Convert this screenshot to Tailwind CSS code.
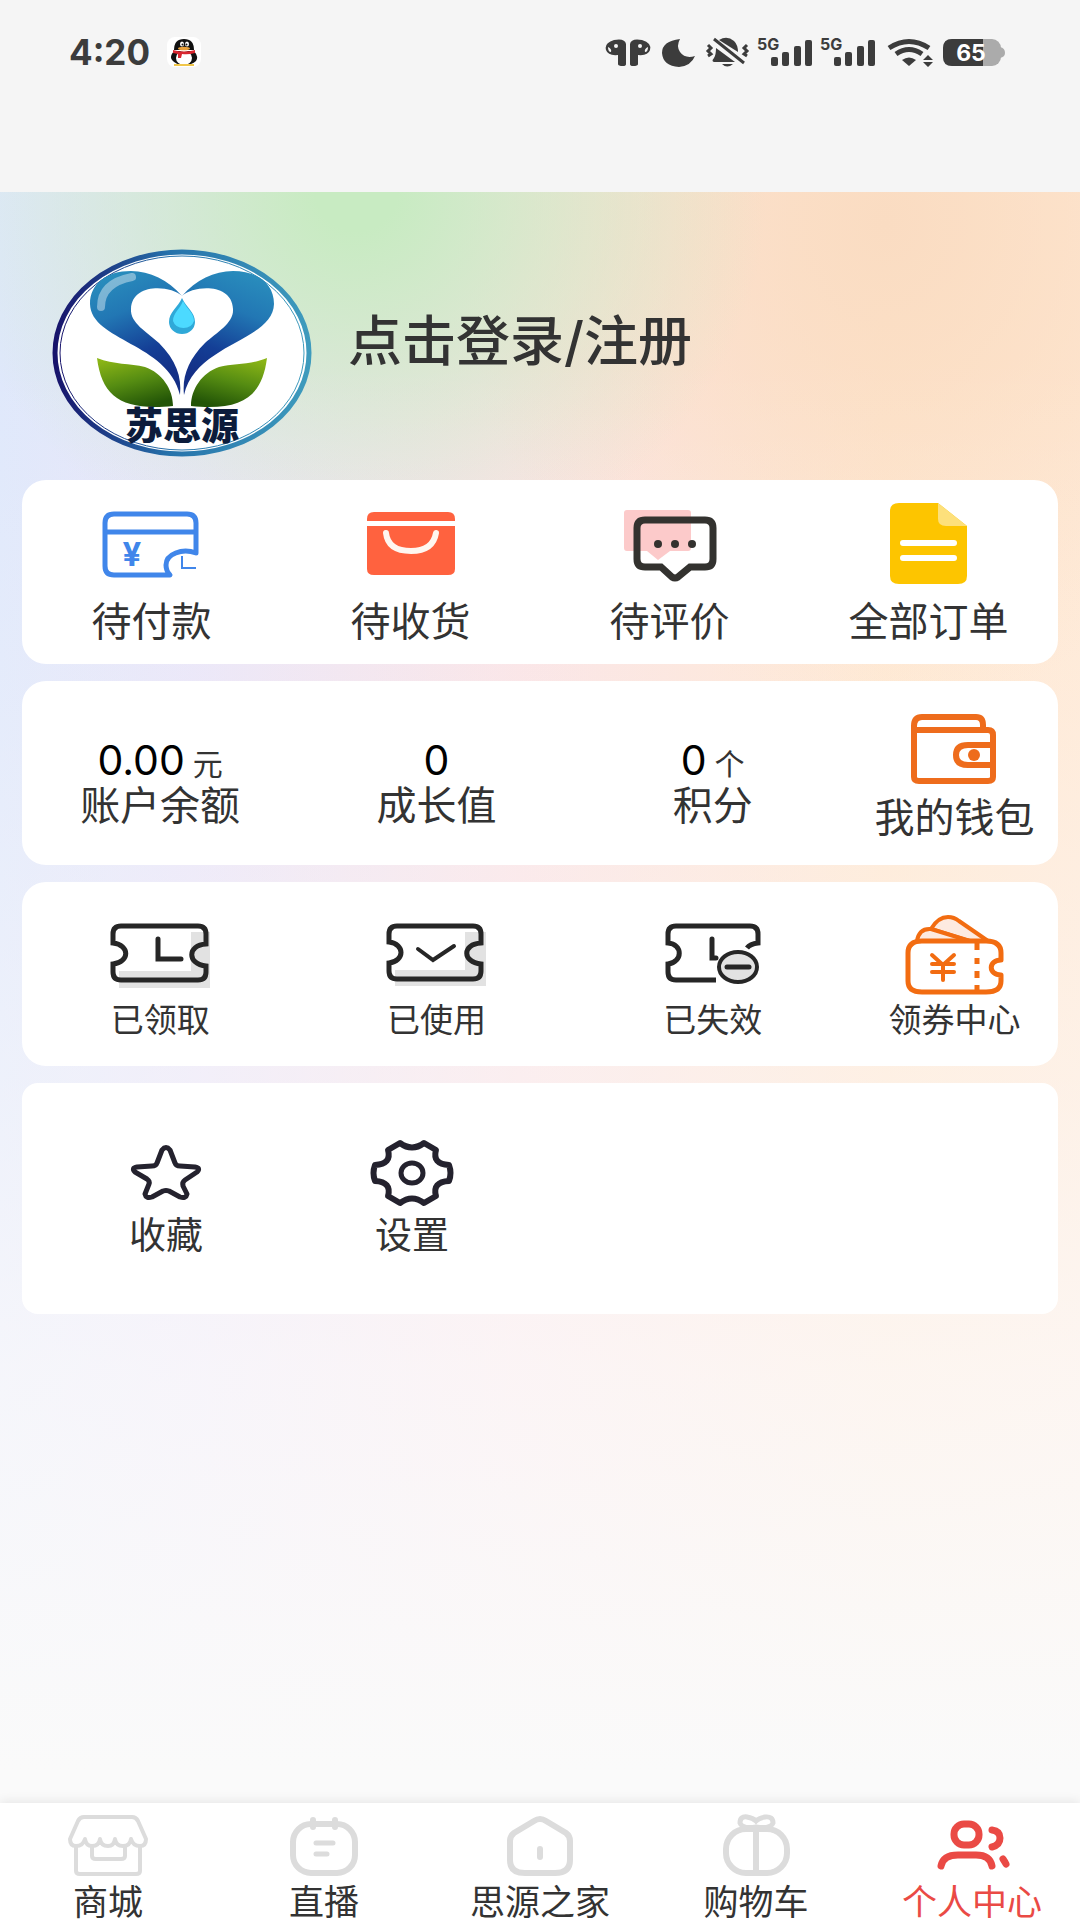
<!DOCTYPE html>
<html lang="zh-CN">
<head>
    <meta charset="UTF-8">
    <meta name="viewport" content="width=device-width, initial-scale=1.0">
    <script src="https://cdn.jsdelivr.net/npm/@tailwindcss/browser@4"></script>
    <title>个人中心</title>
</head>
<body class="min-h-screen flex flex-col bg-[#f5f5f5] text-[#333] font-['Inter','Noto_Sans_CJK_SC',sans-serif]">

    <!-- status bar -->
    <div class="h-48 shrink-0 pt-7 pl-[69px] pr-[75px]">
        <div class="flex items-center justify-between h-12">
            <div class="flex items-center gap-4">
                <span class="text-[35px] leading-12 font-bold text-[#3c3c3c]">4:20</span>
                <svg class="w-9 h-8" viewBox="0 0 36 32">
                    <rect x="1" y="1" width="34" height="30" rx="8" fill="#fff"/>
                    <path d="M6 24Q3 21 8 15L28 15Q33 21 30 25Q26 29 18 29Q10 29 6 24Z" fill="#111"/>
                    <ellipse cx="18" cy="22" rx="8" ry="7" fill="#fff"/>
                    <path d="M8 14Q8 3 18 3Q28 3 28 14Z" fill="#111"/>
                    <ellipse cx="16" cy="8" rx="2" ry="2.5" fill="#fff"/>
                    <ellipse cx="21" cy="8" rx="2" ry="2.5" fill="#fff"/>
                    <circle cx="16.500" cy="8.500" r="1" fill="#111"/>
                    <circle cx="20.500" cy="8.500" r="1" fill="#111"/>
                    <ellipse cx="18" cy="12.500" rx="6" ry="1.800" fill="#e9a13b"/>
                    <path d="M7 14Q18 17 29 14L29 17Q22 19 16 18L15 22L12 22V18L7 17Z" fill="#d8262f"/>
                    <path d="M8 29H28" stroke="#f0c64a" stroke-width="2"/>
                </svg>
            </div>
            <div class="flex items-center gap-1.5 text-[#3c3c3c]">
                <svg class="w-[50px] h-8" viewBox="0 0 50 32" fill="currentColor">
                    <path d="M21 8V28Q21 30 18 30Q13 30 13 28V19Q3 20 1 14Q-1 7 9 4Q20 2 21 8Z"/>
                    <path d="M25 8V28Q25 30 28 30Q33 30 33 28V19Q43 20 45 14Q47 7 37 4Q26 2 25 8Z"/>
                    <path d="M3 11Q3 16 6 16Q7 13 3 11ZM43 11Q43 16 40 16Q39 13 43 11Z" fill="#f5f5f5"/>
                    <circle cx="11" cy="10" r="2" fill="#f5f5f5"/>
                    <circle cx="35" cy="10" r="2" fill="#f5f5f5"/>
                </svg>
                <svg class="w-[38px] h-8" viewBox="0 0 38 32" fill="currentColor">
                    <path d="M19 3Q15 10 19 16Q24 23 34 20Q30 30 18 31Q2 30 1 17Q1 5 19 3Z"/>
                </svg>
                <svg class="w-[45px] h-8" viewBox="0 0 45 32" fill="currentColor">
                    <path d="M14 4Q22 -1 29 5Q33 9 33 16Z"/>
                    <path d="M11 12L30 26H9Q6 25 9 22Q11 19 11 12Z"/>
                    <path d="M17 28H28Q22 33 17 28Z"/>
                    <path d="M9 3L39 27M3 9L6 12L3 15L6 18L3 20M42 9L39 12L42 15L39 18L42 20" fill="none" stroke="currentColor" stroke-width="3"/>
                </svg>
                <svg class="w-[57px] h-8 overflow-visible" viewBox="0 0 57 32" fill="currentColor">
                    <text x="1" y="14" font-size="16" font-weight="700">5G</text>
                    <rect x="15" y="21" width="7" height="9" rx="2"/>
                    <rect x="26" y="16" width="7" height="14" rx="2"/>
                    <rect x="38" y="10" width="7" height="20" rx="2"/>
                    <rect x="49" y="4" width="7" height="26" rx="2"/>
                </svg>
                <svg class="w-[57px] h-8 overflow-visible" viewBox="0 0 57 32" fill="currentColor">
                    <text x="1" y="14" font-size="16" font-weight="700">5G</text>
                    <rect x="15" y="21" width="7" height="9" rx="2"/>
                    <rect x="26" y="16" width="7" height="14" rx="2"/>
                    <rect x="38" y="10" width="7" height="20" rx="2"/>
                    <rect x="49" y="4" width="7" height="26" rx="2"/>
                </svg>
                <svg class="w-[53px] h-8" viewBox="0 0 53 32">
                    <path d="M7 12Q27 -1 47 12M14 18Q27 9 40 18" fill="none" stroke="currentColor" stroke-width="5"/>
                    <path d="M20 24Q27 19 34 24L27 30Z" fill="currentColor"/>
                    <path d="M46 19L51 24H41ZM41 26H51L46 31Z" fill="currentColor"/>
                </svg>
                <svg class="w-16 h-8" viewBox="0 0 64 32">
                    <rect x="2" y="3" width="58" height="27" rx="9" fill="#ababab"/>
                    <path d="M59 11Q64 12 64 17Q64 21 59 22Z" fill="#ababab"/>
                    <path d="M11 3H42V30H11Q2 30 2 21V12Q2 3 11 3Z" fill="currentColor"/>
                    <text x="30" y="25" text-anchor="middle" font-size="23" font-weight="700" fill="#fff">65</text>
                </svg>
            </div>
        </div>
    </div>

    <main class="flex-1 pb-8 bg-[linear-gradient(to_bottom,rgba(251,250,251,0)_10%,rgba(252,250,251,0.2)_32%,rgba(252,250,251,0.5)_55%,rgba(252,250,251,0.76)_73%,#fafafa_98%),radial-gradient(ellipse_38%_24%_at_33%_0%,#c8ebc2_10%,transparent),radial-gradient(ellipse_40%_30%_at_82%_2%,#fadcc2,transparent),linear-gradient(to_right,#dfe8fb,#e8e4f8_18%,#fae2e4_48%,#ffe6cd_82%,#ffe8d3)]">

        <header class="flex items-start gap-9 pt-[57px] pl-[52px] pr-6 pb-[23px]">
            <svg class="w-[260px] h-[208px] shrink-0" viewBox="0 0 260 208">
                <defs>
                    <linearGradient id="ring">
                        <stop offset="0" stop-color="#17136b"/>
                        <stop offset="0.45" stop-color="#2672ab"/>
                        <stop offset="1" stop-color="#3e9bbd"/>
                    </linearGradient>
                    <linearGradient id="heart" x1="0" y1="0" x2="0.3" y2="1">
                        <stop offset="0" stop-color="#2b93bf"/>
                        <stop offset="0.4" stop-color="#2277b4"/>
                        <stop offset="0.75" stop-color="#143f96"/>
                        <stop offset="1" stop-color="#142f86"/>
                    </linearGradient>
                    <linearGradient id="leaf" x1="0.2" y1="0" x2="0.6" y2="1">
                        <stop offset="0" stop-color="#8bb516"/>
                        <stop offset="0.5" stop-color="#558c12"/>
                        <stop offset="1" stop-color="#235507"/>
                    </linearGradient>
                    <g id="half">
                        <path d="M130 47C116 31 98 22 79 22C54 22 38 35 38 55C39 92 116 94 128 146C130 128 124 111 107 94C95 83 78 74 79 60C80 34 118 36 130 47Z" fill="url(#heart)"/>
                        <path d="M45 109C62 116 78 114 93 118C110 124 121 140 121 157C70 162 50 148 45 109Z" fill="url(#leaf)"/>
                    </g>
                </defs>
                <ellipse cx="130" cy="104" rx="127" ry="101" fill="#fff" stroke="url(#ring)" stroke-width="5"/>
                <ellipse cx="130" cy="104" rx="122" ry="97" fill="none" stroke="url(#ring)" stroke-width="1"/>
                <use href="#half"/>
                <use href="#half" transform="translate(260 0) scale(-1 1)"/>
                <path d="M49 58Q49 34 80 28" fill="none" stroke="#fff" stroke-opacity="0.4" stroke-width="8" stroke-linecap="round"/>
                <path d="M130 49C134 58 143 63 143 73A13 12 0 0 1 117 73C117 63 126 58 130 49Z" fill="#2fa9d8"/>
                <path d="M131 52C135 60 142 64 142 72A11 10 0 0 1 121 72C121 64 128 60 131 52Z" fill="#4cdaff"/>
                <text x="130" y="190" text-anchor="middle" font-size="38" font-weight="900" fill="#0c1c3c">苏思源</text>
            </svg>
            <a href="#login" class="mt-[61px] text-[54px] leading-16 font-medium">点击登录/注册</a>
        </header>

        <div class="flex flex-col gap-[17px] px-[22px]">
            <!-- orders -->
            <section class="grid grid-cols-4 bg-white rounded-3xl pt-[22px] pb-[18px] text-[40px] leading-12">
                <a href="#unpaid" class="flex flex-col items-center gap-3">
                    <svg class="w-[100px] h-[84px]" viewBox="0 0 100 84">
                        <path d="M68 73H12Q3 73 3 64V21Q3 12 12 12H85Q94 12 94 21V51C80 46 64 52 64 63Q64 69 68 73ZM3 30H94" fill="none" stroke="#4086ea" stroke-width="5" stroke-linejoin="round"/>
                        <text x="30" y="64" text-anchor="middle" font-size="33" font-weight="700" fill="#4086ea">¥</text>
                        <path d="M80 54V66H94" fill="none" stroke="#4086ea" stroke-width="2"/>
                    </svg>
                    待付款
                </a>
                <a href="#shipping" class="flex flex-col items-center gap-3">
                    <svg class="w-[100px] h-[84px]" viewBox="0 0 100 84">
                        <path d="M6 19V17Q6 10 13 10H87Q94 10 94 17V19ZM6 24H94V67Q94 73 87 73H13Q6 73 6 67Z" fill="#ff623f"/>
                        <path d="M25 31Q27 49 50 49Q72 49 75 31" fill="none" stroke="#fff6f0" stroke-width="6" stroke-linecap="round"/>
                    </svg>
                    待收货
                </a>
                <a href="#review" class="flex flex-col items-center gap-3">
                    <svg class="w-[100px] h-[84px]" viewBox="0 0 100 84">
                        <path d="M7 8H68Q71 8 71 11V46Q71 49 68 49H50L38 58L27 49H7Q4 49 4 46V11Q4 8 7 8Z" fill="#fccaca"/>
                        <path d="M25 18H85Q93 18 93 26V57Q93 65 85 65H70L58 75Q55 77 52 75L41 65H25Q17 65 17 57V26Q17 18 25 18Z" fill="none" stroke="#33322f" stroke-width="7"/>
                        <g fill="#33322f">
                            <circle cx="38" cy="42" r="4"/>
                            <circle cx="55" cy="42" r="4"/>
                            <circle cx="72" cy="42" r="4"/>
                        </g>
                    </svg>
                    待评价
                </a>
                <a href="#orders" class="flex flex-col items-center gap-3">
                    <svg class="w-[100px] h-[84px]" viewBox="0 0 100 84">
                        <path d="M20 1H59L88 24V74Q88 82 79 82H20Q11 82 11 74V9Q11 1 20 1Z" fill="#fdc500"/>
                        <path d="M59 1L88 24H67Q59 24 59 17Z" fill="#fde07b"/>
                        <path d="M24 41H75M24 56H75" stroke="#fff" stroke-width="6" stroke-linecap="round"/>
                    </svg>
                    全部订单
                </a>
            </section>

            <!-- wallet -->
            <section class="grid grid-cols-[4fr_4fr_4fr_3fr] bg-white rounded-3xl pt-[25px] pb-[23px] text-[40px] leading-12">
                <a href="#balance" class="flex flex-col items-center pt-8">
                    <span class="flex items-baseline gap-2 h-11 leading-11"><span class="text-[41px] text-black">0.00</span><span class="text-[30px]">元</span></span>
                    账户余额
                </a>
                <a href="#growth" class="flex flex-col items-center pt-8">
                    <span class="flex items-baseline h-11 leading-11"><span class="text-[41px] text-black">0</span></span>
                    成长值
                </a>
                <a href="#points" class="flex flex-col items-center pt-8">
                    <span class="flex items-baseline gap-2 h-11 leading-11"><span class="text-[41px] text-black">0</span><span class="text-[30px]">个</span></span>
                    积分
                </a>
                <a href="#wallet" class="flex flex-col items-center gap-1">
                    <svg class="w-[100px] h-[84px]" viewBox="0 0 100 84" fill="none" stroke="#ee6c1c" stroke-width="6">
                        <path d="M10 23V71Q10 75 15 75H84Q89 75 89 71V29Q89 24 84 24H10V20Q10 11 18 11H72Q79 11 79 19V24"/>
                        <path d="M89 39H64Q52 39 52 49Q52 59 64 59H89"/>
                        <circle cx="70" cy="49" r="6" fill="#ee6c1c" stroke="none"/>
                    </svg>
                    我的钱包
                </a>
            </section>

            <!-- coupons -->
            <section class="grid grid-cols-[4fr_4fr_4fr_3fr] bg-white rounded-3xl pt-[30px] pb-[26px] text-[33px] leading-10">
                <a href="#received" class="flex flex-col items-center gap-1">
                    <svg class="w-[100px] h-[84px]" viewBox="0 0 100 84">
                        <path d="M9 20H100V76H9Z" fill="#e2e2e2"/>
                        <path d="M4 16H81V59H4Z" fill="#fff"/>
                        <path d="M3 31V22Q3 14 11 14H88Q96 14 96 22V32C77 33 77 52 96 54V60Q96 68 88 68H11Q3 68 3 60V52C20 50 20 33 3 31Z" fill="none" stroke="#262626" stroke-width="5"/>
                        <path d="M48 27V47H71" fill="none" stroke="#262626" stroke-width="5" stroke-linecap="round"/>
                    </svg>
                    已领取
                </a>
                <a href="#used" class="flex flex-col items-center gap-1">
                    <svg class="w-[100px] h-[84px]" viewBox="0 0 100 84">
                        <path d="M9 20H100V74H9Z" fill="#e2e2e2"/>
                        <path d="M4 16H79V58H4Z" fill="#fff"/>
                        <path d="M3 30V22Q3 14 11 14H87Q95 14 95 22V31C76 32 76 50 95 52V59Q95 67 87 67H11Q3 67 3 59V51C19 49 19 32 3 30Z" fill="none" stroke="#262626" stroke-width="5"/>
                        <path d="M32 37L47 48L68 34" fill="none" stroke="#262626" stroke-width="4" stroke-linecap="round"/>
                    </svg>
                    已使用
                </a>
                <a href="#expired" class="flex flex-col items-center gap-1">
                    <svg class="w-[100px] h-[84px]" viewBox="0 0 100 84">
                        <path d="M53 68H13Q5 68 5 60V52C20 50 20 32 5 31V22Q5 14 13 14H87Q95 14 95 22V31Q87 32 84 36" fill="none" stroke="#262626" stroke-width="5"/>
                        <path d="M49 27V46H53" fill="none" stroke="#262626" stroke-width="5" stroke-linecap="round"/>
                        <ellipse cx="75" cy="55" rx="19" ry="15" fill="#e2e2e2" stroke="#262626" stroke-width="4"/>
                        <path d="M64 55H86" stroke="#262626" stroke-width="5" stroke-linecap="round"/>
                    </svg>
                    已失效
                </a>
                <a href="#coupons" class="flex flex-col items-center gap-1">
                    <svg class="w-[100px] h-[84px]" viewBox="0 0 100 84" fill="none" stroke="#f26c11" stroke-width="5" stroke-linejoin="round">
                        <path d="M27 17Q34 5 44 5Q50 5 55 9L84 29H65Z" fill="#fdeae0" stroke-width="4"/>
                        <path d="M13 29Q15 16 27 17L66 29Z" fill="#fdeae0" stroke-width="4"/>
                        <path d="M18 29H82Q97 29 97 41V48C84 48 84 63 97 63V69Q97 80 82 80H18Q4 80 4 69V41Q4 29 18 29Z" fill="#fff"/>
                        <path d="M73 30V38M73 46V52M73 59V66M73 73V80"/>
                        <path d="M28 43L39 53L50 43M39 53V68M28 52H50M28 60H50" stroke-width="4" stroke-linecap="round"/>
                    </svg>
                    领券中心
                </a>
            </section>

            <!-- tools -->
            <section class="grid grid-cols-4 bg-white rounded-2xl pt-[47px] pb-14 pl-[21px] pr-[31px] text-[37px] leading-11">
                <a href="#favorites" class="flex flex-col items-center">
                    <svg class="w-[100px] h-[84px]" viewBox="0 0 100 84">
                        <path d="M46 20Q50 15 54 20L59 33Q60 36 64 36L79 37Q85 38 81 42L69 50Q66 52 67 56L71 64Q70 69 64 67L53 61Q50 60 47 61L36 67Q30 69 29 64L33 54Q34 51 31 49L19 42Q15 38 21 37L36 36Q40 36 41 33Z" fill="none" stroke="#24222e" stroke-width="5" stroke-linejoin="round"/>
                    </svg>
                    收藏
                </a>
                <a href="#settings" class="flex flex-col items-center">
                    <svg class="w-[100px] h-[84px]" viewBox="0 0 100 84" fill="none" stroke="#24222e" stroke-width="6" stroke-linejoin="round">
                        <path d="M26 20L38 13Q50 22 62 13L74 20Q70 34 87 35Q90 43 87 51Q70 52 74 66L62 73Q50 64 38 73L26 66Q30 52 13 51Q10 43 13 35Q30 34 26 20Z"/>
                        <ellipse cx="50" cy="43" rx="11" ry="10" stroke-width="5"/>
                    </svg>
                    设置
                </a>
            </section>
        </div>
    </main>

    <nav class="grid grid-cols-5 pt-2.5 bg-white text-[35px] leading-9 shadow-[0_-2px_10px_rgba(0,0,0,0.08)]">
        <a href="#mall" class="flex flex-col items-center gap-[7px]">
            <svg class="w-[100px] h-16" viewBox="0 0 100 64" fill="none" stroke="#dcdcdc" stroke-width="4" stroke-linejoin="round">
                <path d="M26 4H74Q78 4 80 8L88 26Q88 33 82 33Q75 33 73 26Q72 33 65 33Q58 33 57 26Q56 33 50 33Q43 33 42 26Q41 33 34 33Q28 33 27 26Q25 33 18 33Q12 33 12 26L20 8Q22 4 26 4Z"/>
                <path d="M18 33V58Q18 61 22 61H78Q82 61 82 58V33M34 33V43Q34 46 38 46H63Q67 46 67 43V33"/>
            </svg>
            商城
        </a>
        <a href="#live" class="flex flex-col items-center gap-[7px]">
            <svg class="w-[100px] h-16" viewBox="0 0 100 64" fill="none" stroke="#dcdcdc" stroke-width="6" stroke-linecap="round">
                <rect x="19" y="11" width="62" height="49" rx="18"/>
                <path d="M39 7V14M61 7V14"/>
                <path d="M42 30H59M42 41H53" stroke-width="5"/>
            </svg>
            直播
        </a>
        <a href="#home" class="flex flex-col items-center gap-[7px]">
            <svg class="w-[100px] h-16" viewBox="0 0 100 64" fill="none" stroke="#dcdcdc" stroke-width="6" stroke-linecap="round">
                <path d="M44 8Q50 4 56 8L76 20Q80 23 80 28V47Q80 60 65 60H35Q20 60 20 47V28Q20 23 24 20Z"/>
                <path d="M50 36V44"/>
            </svg>
            思源之家
        </a>
        <a href="#cart" class="flex flex-col items-center gap-[7px]">
            <svg class="w-[100px] h-16" viewBox="0 0 100 64" fill="none" stroke="#dcdcdc" stroke-width="6">
                <rect x="20" y="16" width="61" height="44" rx="20"/>
                <path d="M50 15V61"/>
                <path d="M50 14Q36 16 34 10Q34 3 41 4Q47 5 50 8Q53 5 59 4Q67 3 67 10Q65 16 50 14Z" fill="#fff" stroke-width="5"/>
            </svg>
            购物车
        </a>
        <a href="#me" class="flex flex-col items-center gap-[7px] text-[#ea4a45]">
            <svg class="w-[100px] h-16" viewBox="0 0 100 64" fill="none" stroke="currentColor" stroke-width="7" stroke-linecap="round">
                <rect x="32" y="11" width="25" height="21" rx="10"/>
                <path d="M19 53Q21 42 36 42H54Q68 42 70 53M70 17Q78 18 78 25Q78 32 70 34M81 46Q83 49 84 51"/>
            </svg>
            个人中心
        </a>
    </nav>
</body>
</html>
